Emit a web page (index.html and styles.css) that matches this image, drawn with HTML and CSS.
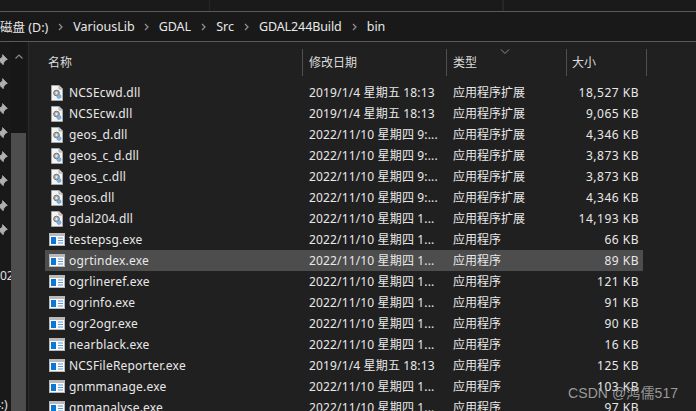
FILE: index.html
```html
<!DOCTYPE html>
<html lang="zh-CN">
<head>
<meta charset="utf-8">
<title>bin</title>
<link rel="stylesheet" href="styles.css">
</head>
<body>
<svg class="defs" width="0" height="0" aria-hidden="true">
  <symbol id="dll" viewBox="0 0 12 16">
    <path d="M.5.5h7.500l3.500 3.500v11.500h-11z" fill="#f4f4f4" stroke="#a8a8a8"/>
    <path d="M8 .5v3.500h3.500" fill="#d8d8d8" stroke="#a8a8a8"/>
    <circle cx="5.500" cy="8" r="2.800" fill="#b4b4b4" stroke="#6f6f6f"/>
    <circle cx="5.500" cy="8" r="1" fill="#f0f0f0"/>
    <circle cx="8" cy="11.500" r="2" fill="#7fb4e6" stroke="#5a8fc4" stroke-width=".6"/>
  </symbol>
  <symbol id="exe" viewBox="0 0 16 13">
    <rect x="0" y="0" width="16" height="13" fill="#b9b9b9"/>
    <rect x="1" y="3" width="14" height="9" fill="#fbfbfb"/>
    <rect x="2" y="4" width="5" height="7" fill="#0a78d7"/>
    <path d="M9 5h5M9 7.500h5M9 10h5" stroke="#5a9ad6" stroke-width="1.200"/>
  </symbol>
  <symbol id="pin" viewBox="0 0 10 10">
    <path d="M5.500 .5l4 4-1.500.7-1.600 2-.4 1.800-4.500-4.500 1.800-.4 2-1.600zM3 7l-2.500 2.500" fill="#b0b0b0" stroke="#b0b0b0" stroke-width=".6"/>
  </symbol>
  <symbol id="chev" viewBox="0 0 5 8">
    <path d="M1 1l3 3-3 3" fill="none" stroke="#8e8e8e" stroke-width="1.300"/>
  </symbol>
</svg>

<div class="window">
  <div class="ribbon">
    <span class="ribbon-cell ribbon-a"></span>
    <span class="ribbon-cell ribbon-b"></span>
    <span class="ribbon-cell"></span>
  </div>

  <nav class="address">
    <span class="crumb">磁盘 (D:)</span><svg class="chev"><use href="#chev"/></svg>
    <span class="crumb crumb-lib">VariousLib</span><svg class="chev"><use href="#chev"/></svg>
    <span class="crumb">GDAL</span><svg class="chev"><use href="#chev"/></svg>
    <span class="crumb">Src</span><svg class="chev"><use href="#chev"/></svg>
    <span class="crumb crumb-tight">GDAL244Build</span><svg class="chev"><use href="#chev"/></svg>
    <span class="crumb">bin</span>
  </nav>

  <div class="main">
    <aside class="side">
      <div class="pins">
        <svg class="pin"><use href="#pin"/></svg>
        <svg class="pin"><use href="#pin"/></svg>
        <svg class="pin"><use href="#pin"/></svg>
        <svg class="pin"><use href="#pin"/></svg>
        <svg class="pin"><use href="#pin"/></svg>
        <svg class="pin"><use href="#pin"/></svg>
        <svg class="pin"><use href="#pin"/></svg>
        <svg class="pin"><use href="#pin"/></svg>
        <span class="clip clip-a">02</span>
        <span class="clip clip-b">4:)</span>
      </div>
      <div class="scroll">
        <svg class="up" width="8" height="5" viewBox="0 0 8 5"><path d="M.5 4.500L4 1l3.500 3.500" fill="none" stroke="#8a8a8a" stroke-width="1.200"/></svg>
        <div class="thumb"></div>
      </div>
    </aside>

    <section class="files">
      <header class="head">
        <div class="hc hc-name">名称</div>
        <div class="hc hc-date">修改日期</div>
        <div class="hc hc-type">类型
          <svg class="sort" width="10" height="5" viewBox="0 0 10 5"><path d="M1 .5l4 4 4-4" fill="none" stroke="#8c8c8c"/></svg>
        </div>
        <div class="hc hc-size">大小</div>
      </header>
      <div class="rows">
        <div class="row"><svg class="ico-dll"><use href="#dll"/></svg><span class="name">NCSEcwd.dll</span><span class="date">2019/1/4 星期五 18:13</span><span class="type">应用程序扩展</span><span class="size">18,527 KB</span></div>
        <div class="row"><svg class="ico-dll"><use href="#dll"/></svg><span class="name">NCSEcw.dll</span><span class="date">2019/1/4 星期五 18:13</span><span class="type">应用程序扩展</span><span class="size">9,065 KB</span></div>
        <div class="row"><svg class="ico-dll"><use href="#dll"/></svg><span class="name">geos_d.dll</span><span class="date">2022/11/10 星期四 9:...</span><span class="type">应用程序扩展</span><span class="size">4,346 KB</span></div>
        <div class="row"><svg class="ico-dll"><use href="#dll"/></svg><span class="name">geos_c_d.dll</span><span class="date">2022/11/10 星期四 9:...</span><span class="type">应用程序扩展</span><span class="size">3,873 KB</span></div>
        <div class="row"><svg class="ico-dll"><use href="#dll"/></svg><span class="name">geos_c.dll</span><span class="date">2022/11/10 星期四 9:...</span><span class="type">应用程序扩展</span><span class="size">3,873 KB</span></div>
        <div class="row"><svg class="ico-dll"><use href="#dll"/></svg><span class="name">geos.dll</span><span class="date">2022/11/10 星期四 9:...</span><span class="type">应用程序扩展</span><span class="size">4,346 KB</span></div>
        <div class="row"><svg class="ico-dll"><use href="#dll"/></svg><span class="name">gdal204.dll</span><span class="date">2022/11/10 星期四 1...</span><span class="type">应用程序扩展</span><span class="size">14,193 KB</span></div>
        <div class="row"><svg class="ico-exe"><use href="#exe"/></svg><span class="name">testepsg.exe</span><span class="date">2022/11/10 星期四 1...</span><span class="type">应用程序</span><span class="size">66 KB</span></div>
        <div class="row row-on"><svg class="ico-exe"><use href="#exe"/></svg><span class="name">ogrtindex.exe</span><span class="date">2022/11/10 星期四 1...</span><span class="type">应用程序</span><span class="size">89 KB</span></div>
        <div class="row"><svg class="ico-exe"><use href="#exe"/></svg><span class="name">ogrlineref.exe</span><span class="date">2022/11/10 星期四 1...</span><span class="type">应用程序</span><span class="size">121 KB</span></div>
        <div class="row"><svg class="ico-exe"><use href="#exe"/></svg><span class="name">ogrinfo.exe</span><span class="date">2022/11/10 星期四 1...</span><span class="type">应用程序</span><span class="size">91 KB</span></div>
        <div class="row"><svg class="ico-exe"><use href="#exe"/></svg><span class="name">ogr2ogr.exe</span><span class="date">2022/11/10 星期四 1...</span><span class="type">应用程序</span><span class="size">90 KB</span></div>
        <div class="row"><svg class="ico-exe"><use href="#exe"/></svg><span class="name">nearblack.exe</span><span class="date">2022/11/10 星期四 1...</span><span class="type">应用程序</span><span class="size">16 KB</span></div>
        <div class="row"><svg class="ico-exe"><use href="#exe"/></svg><span class="name">NCSFileReporter.exe</span><span class="date">2019/1/4 星期五 18:13</span><span class="type">应用程序</span><span class="size">125 KB</span></div>
        <div class="row"><svg class="ico-exe"><use href="#exe"/></svg><span class="name">gnmmanage.exe</span><span class="date">2022/11/10 星期四 1...</span><span class="type">应用程序</span><span class="size">103 KB</span></div>
        <div class="row"><svg class="ico-exe"><use href="#exe"/></svg><span class="name">gnmanalyse.exe</span><span class="date">2022/11/10 星期四 1...</span><span class="type">应用程序</span><span class="size">97 KB</span></div>
      </div>
    </section>
  </div>

  <div class="mark">CSDN @鸿儒517</div>
</div>
</body>
</html>
```
FILE: styles.css
```css
* { box-sizing: border-box; }
html, body { margin: 0; padding: 0; height: 100%; overflow: hidden; }
body {
  background: #202020;
  color: #e6e6e6;
  font-family: "Noto Sans", "Noto Sans CJK SC", sans-serif;
  font-size: 12px;
}
.defs { position: absolute; }
.window { position: relative; width: 696px; height: 411px; overflow: hidden; display: flex; flex-direction: column; }

.ribbon { height: 12px; flex: none; display: flex; background: #1a1a1a; border-bottom: 1px solid #303030; }
.ribbon-cell { display: block; border-right: 1px solid #262626; }
.ribbon-a { width: 210px; }
.ribbon-b { width: 293px; }

.address {
  height: 31px; flex: none; display: flex; align-items: center;
  background: #191919;
  border-top: 1px solid #5a5a5a;
  border-bottom: 1px solid #5a5a5a;
  font-size: 12.500px; color: #e8e8e8;
  margin-top: -1px;
  white-space: nowrap;
}
.crumb-lib { margin-right: -1px; }
.crumb-tight { letter-spacing: -.1px; }
.chev { width: 5px; height: 8px; margin: 1px 10px 0; flex: none; }

.main { flex: 1; display: flex; min-height: 0; background: #202020; }
.side { width: 29px; flex: none; display: flex; background: #191919; border-right: 1px solid #2b2b2b; }
.pins { width: 11px; flex: none; position: relative; padding-top: 12px; display: flex; flex-direction: column; gap: 12.300px; overflow: hidden; }
.pin { width: 12px; height: 12px; flex: none; margin-left: -4px; }
.clip { position: absolute; left: 0; font-size: 12px; line-height: 14px; color: #e0e0e0; }
.clip-a { top: 227px; }
.clip-b { top: 356px; left: -6px; }
.scroll { width: 15px; flex: none; position: relative; background: #171717; }
.up { position: absolute; left: 4px; top: 12px; }
.thumb { position: absolute; left: 0; right: 0; top: 91px; bottom: 0; background: #4d4d4d; }

.files { flex: 1; min-width: 0; }
.head { height: 27px; margin-top: 7px; display: flex; color: #dcdcdc; }
.hc { position: relative; padding-top: 5px; line-height: 17px; border-right: 1px solid #505050; flex: none; }
.hc-name { width: 274px; padding-left: 19px; }
.hc-date { width: 144px; padding-left: 6px; }
.hc-type { width: 120px; padding-left: 6px; }
.hc-size { width: 80px; padding-left: 5px; }
.sort { position: absolute; left: 53px; top: 0; }

.rows { margin-top: 6px; }
.row { position: relative; height: 21px; margin-left: 16px; width: 598px; display: flex; align-items: center; white-space: nowrap; color: #e8e8e8; line-height: 21px; }
.row-on { background: #4d4d4d; }
.ico-dll { width: 12px; height: 16px; margin-left: 6px; margin-right: 6px; flex: none; }
.ico-exe { width: 16px; height: 13px; margin-left: 4px; margin-right: 4px; flex: none; }
.name { width: 240px; flex: none; letter-spacing: .2px; }
.date { width: 144px; flex: none; letter-spacing: .15px; }
.type { width: 110px; flex: none; }
.size { width: 76px; flex: none; text-align: right; letter-spacing: .5px; }

.mark {
  position: absolute; left: 568px; top: 384px;
  color: rgba(178,178,178,.85);
  font-family: "Liberation Sans", "Noto Sans CJK SC", sans-serif;
  font-size: 14px; line-height: 18px; white-space: nowrap;
  letter-spacing: .1px;
}
```
